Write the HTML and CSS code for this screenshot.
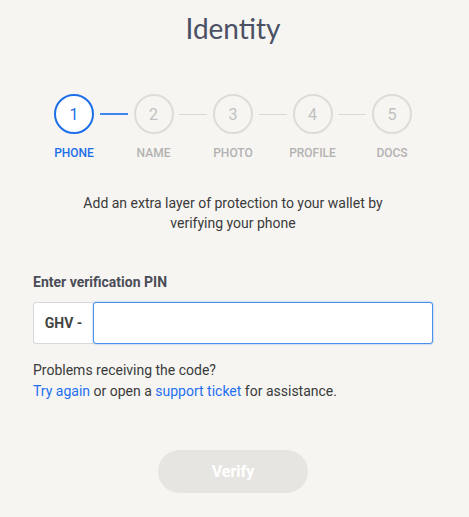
FILE: index.html
```html
<!DOCTYPE html>
<html>
<head>
<meta charset="utf-8">
<link rel="stylesheet" href="styles.css">
</head>
<body>
<main class="page">
  <h1 class="title">Identity</h1>
  <div class="steps">
    <div class="circles">
      <span class="circle active">1</span>
      <span class="line active"></span>
      <span class="circle">2</span>
      <span class="line"></span>
      <span class="circle">3</span>
      <span class="line"></span>
      <span class="circle">4</span>
      <span class="line"></span>
      <span class="circle">5</span>
    </div>
    <div class="labels">
      <span class="label active">PHONE</span>
      <span class="label">NAME</span>
      <span class="label">PHOTO</span>
      <span class="label">PROFILE</span>
      <span class="label">DOCS</span>
    </div>
  </div>
  <p class="desc">Add an extra layer of protection to your wallet by<br>verifying your phone</p>
  <label class="field-label" for="pin">Enter verification PIN</label>
  <div class="input-group">
    <span class="prefix">GHV -</span>
    <input id="pin" class="pin" type="text">
  </div>
  <p class="help">Problems receiving the code?<br><a href="#" class="link">Try again</a> or open a <a href="#" class="link">support ticket</a> for assistance.</p>
  <div class="actions">
    <button class="verify" type="button">Verify</button>
  </div>
</main>
</body>
</html>
```
FILE: styles.css
```css
html, body {
  margin: 0;
  padding: 0;
  background: #f6f5f2;
}
body {
  font-family: Roboto, "Liberation Sans", sans-serif;
  color: #333;
}
.page {
  width: 400px;
  margin-left: 33px;
  display: flex;
  flex-direction: column;
}
.title {
  margin: 11px 0 0;
  font-family: Lato, "Open Sans", sans-serif;
  font-weight: 400;
  font-size: 28px;
  line-height: 34px;
  color: #4b5064;
  text-align: center;
}
.steps {
  margin-top: 49px;
  display: flex;
  flex-direction: column;
  align-items: center;
}
.circles {
  display: flex;
  align-items: center;
}
.circle {
  box-sizing: border-box;
  width: 40px;
  height: 40px;
  border-radius: 50%;
  border: 2px solid #dddcd9;
  display: flex;
  align-items: center;
  justify-content: center;
  font-size: 16px;
  color: #c2c1bf;
}
.circle.active {
  border-color: #1c6fe8;
  background: #fff;
  color: #1c6fe8;
}
.line {
  width: 28px;
  height: 1px;
  margin: 0 5.75px;
  background: #d9d8d5;
}
.line.active {
  height: 2px;
  background: #3d87ee;
}
.labels {
  margin-top: 12px;
  display: grid;
  grid-template-columns: repeat(5, 79.5px);
}
.label {
  text-align: center;
  font-size: 12px;
  line-height: 14px;
  font-weight: 500;
  color: #b3b2b0;
}
.label.active {
  color: #1c6fe8;
}
.desc {
  margin: 33px 0 0;
  font-size: 14px;
  line-height: 20px;
  text-align: center;
  color: #3a3a3a;
}
.field-label {
  margin-top: 39px;
  font-size: 14px;
  line-height: 20px;
  font-weight: 700;
  color: #4a4d57;
}
.input-group {
  margin-top: 10px;
  display: flex;
  height: 42px;
}
.prefix {
  box-sizing: border-box;
  width: 60px;
  display: flex;
  align-items: center;
  justify-content: center;
  background: #fff;
  border: 1px solid #d9d9d9;
  border-right: none;
  border-radius: 3px 0 0 3px;
  font-size: 14px;
  font-weight: 700;
  color: #444;
}
.pin {
  box-sizing: border-box;
  flex: 1;
  height: 42px;
  margin: 0;
  border: 1px solid #4a90ec;
  border-radius: 3px;
  box-shadow: 0 0 2px rgba(74, 144, 236, 0.7);
  background: #fff;
  outline: none;
  font-family: inherit;
  font-size: 14px;
  padding: 0 10px;
}
.help {
  margin: 16px 0 0;
  font-size: 14px;
  line-height: 21px;
  color: #3a3a3a;
}
.link {
  color: #1f6ff0;
  text-decoration: none;
}
.actions {
  margin-top: 48px;
  display: flex;
  justify-content: center;
}
.verify {
  width: 150px;
  height: 43px;
  border: none;
  border-radius: 22px;
  background: #e7e5e1;
  color: #fff;
  font-family: inherit;
  font-size: 16px;
  font-weight: 700;
}
```
